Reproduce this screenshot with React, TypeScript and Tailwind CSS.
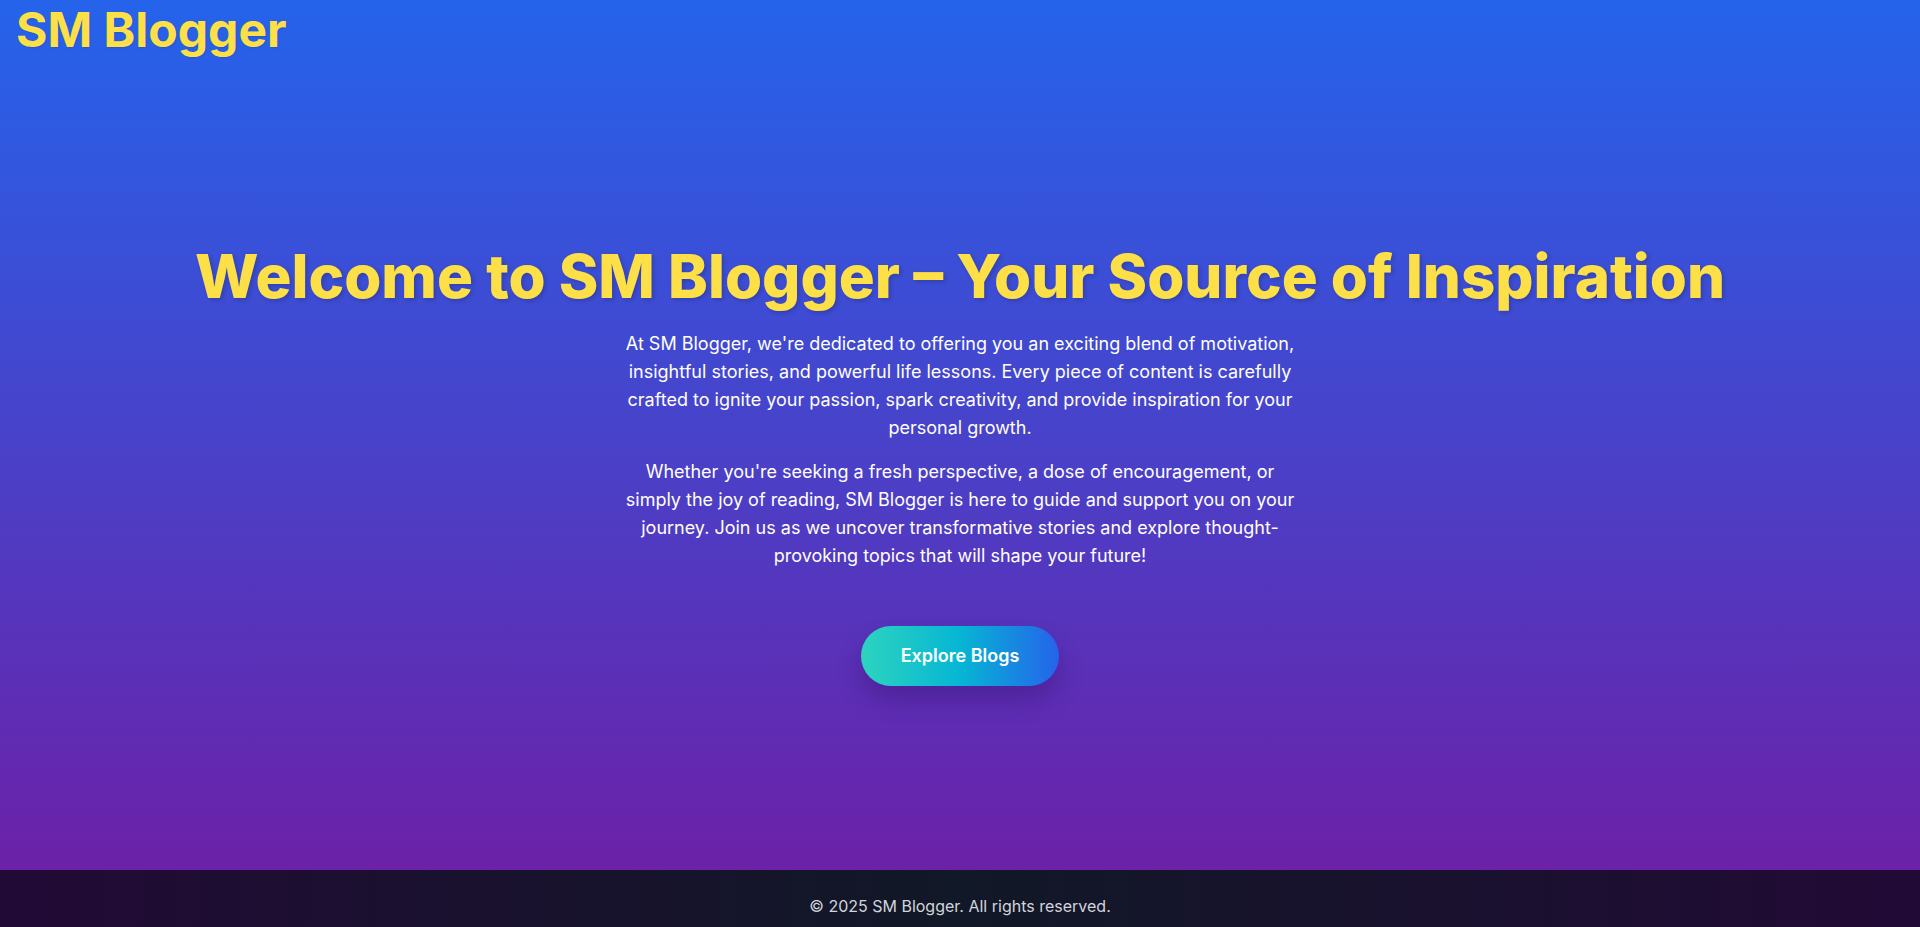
import React from 'react';

const paragraphs = [
  "At SM Blogger, we're dedicated to offering you an exciting blend of motivation, insightful stories, and powerful life lessons. Every piece of content is carefully crafted to ignite your passion, spark creativity, and provide inspiration for your personal growth.",
  "Whether you're seeking a fresh perspective, a dose of encouragement, or simply the joy of reading, SM Blogger is here to guide and support you on your journey. Join us as we uncover transformative stories and explore thought-provoking topics that will shape your future!",
];

export default function App() {
  return (
    <div className="min-h-screen font-['Inter','Liberation_Sans',sans-serif]">
      {/* Hero */}
      <section className="h-[870px] flex flex-col bg-linear-to-b/srgb from-[#2563eb] to-[#6b21a8]">
        <header className="px-4 pt-[6px] pb-1">
          <h1 className="text-5xl leading-none font-bold text-[#fde047] [text-shadow:1px_1px_2px_rgba(0,0,0,0.1)]">
            SM Blogger
          </h1>
        </header>

        <main className="flex-1 flex flex-col items-center justify-center text-center px-4 pt-1">
          <h2 className="text-6xl leading-none font-extrabold text-[#fde047] mb-6 [text-shadow:2px_2px_4px_rgba(0,0,0,0.18)]">
            Welcome to SM Blogger – Your Source of Inspiration
          </h2>
          <div className="max-w-2xl space-y-4">
            {paragraphs.map((p, i) => (
              <p key={i} className="text-lg leading-7 text-white">
                {p}
              </p>
            ))}
          </div>
          <button className="mt-14 px-10 py-4 rounded-full bg-linear-to-r/srgb from-[#2dd4bf] via-[#06b6d4] to-[#2563eb] text-white text-lg leading-7 font-semibold shadow-[0_14px_24px_rgba(40,10,90,0.3)]">
            Explore Blogs
          </button>
        </main>
      </section>

      {/* Footer */}
      <footer className="py-6 text-center bg-linear-to-r/srgb from-[#220a36] via-[#111827] to-[#220a36]">
        <p className="text-base leading-6 text-[#d1d5db]">© 2025 SM Blogger. All rights reserved.</p>
      </footer>
    </div>
  );
}
